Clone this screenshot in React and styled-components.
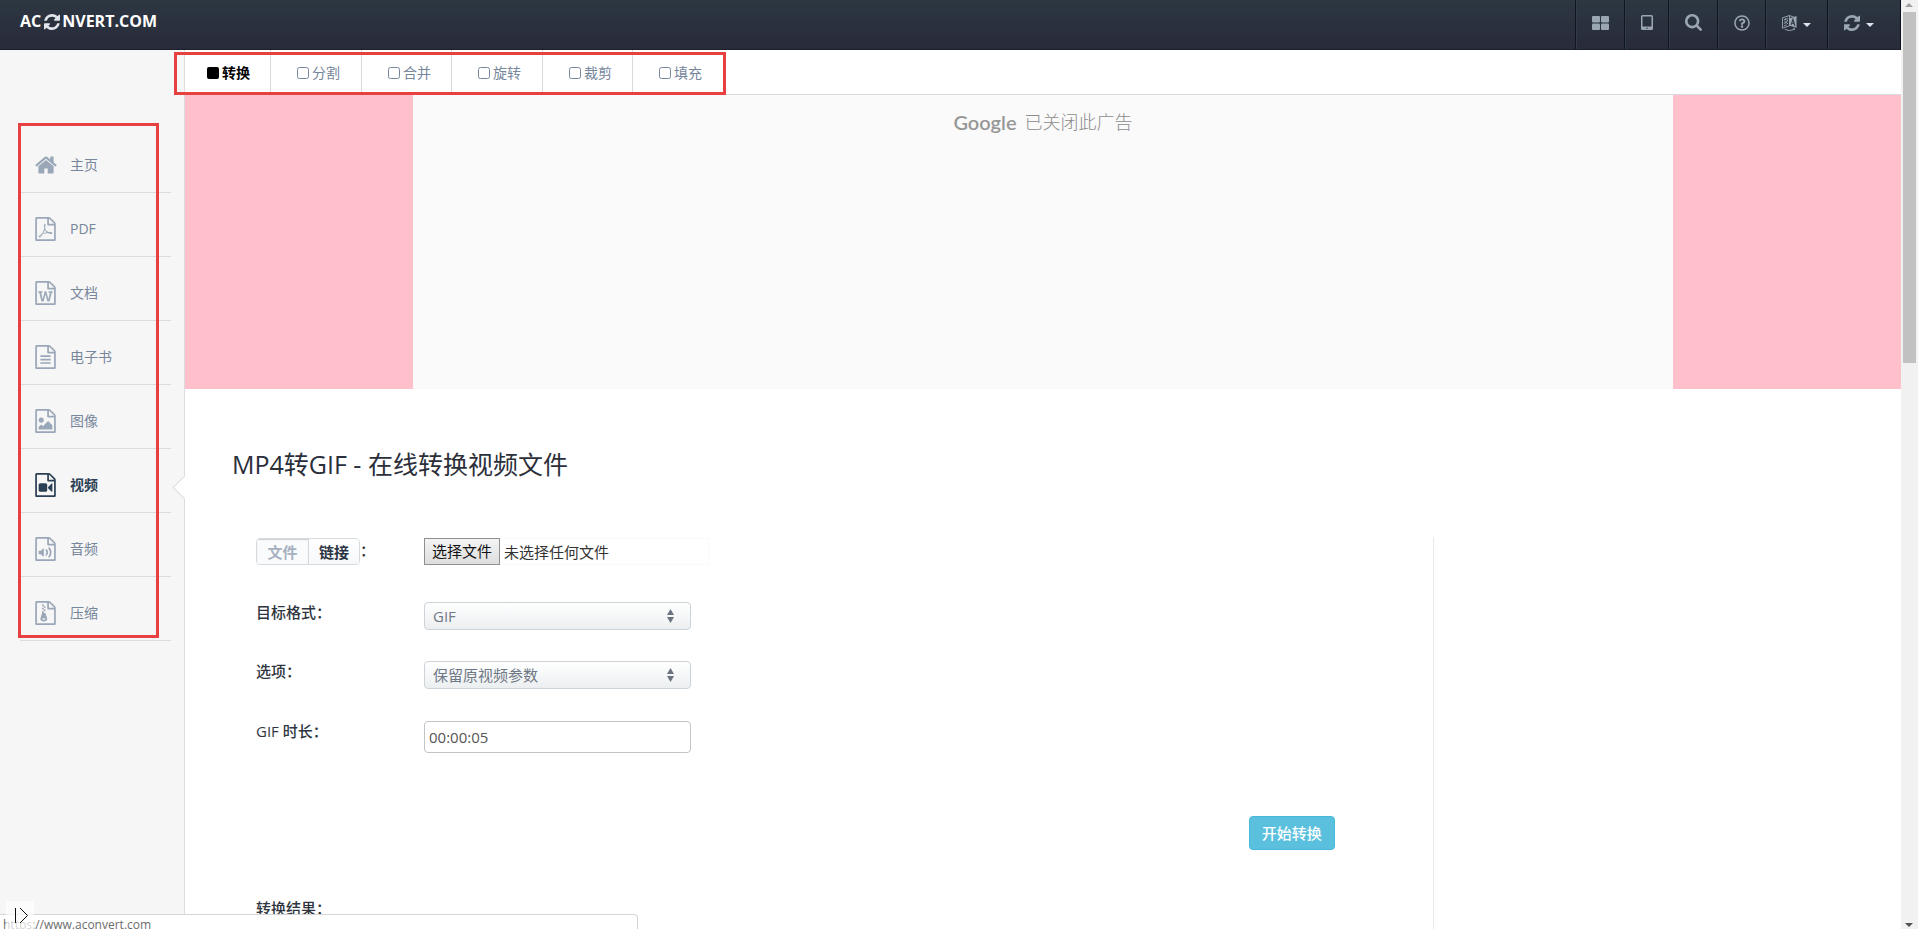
import React from "react";
import styled, { createGlobalStyle, css } from "styled-components";
import { FaRegQuestionCircle } from "react-icons/fa";

const GlobalStyle = createGlobalStyle`
  *, *::before, *::after { box-sizing: border-box; }
  body {
    margin: 0;
    background: #fff;
    color: #2f3540;
    font: 15px/20px "Open Sans", "Noto Sans CJK SC", sans-serif;
    overflow: hidden;
  }
  a { color: inherit; text-decoration: none; }
  button, input, select { font: inherit; margin: 0; }
`;

const Window = styled.div`
  display: flex;
  height: 100vh;
  overflow: hidden;
  position: relative;
`;

const Site = styled.div`
  flex: 1;
  min-width: 0;
  display: flex;
  flex-direction: column;
`;

/* ---------- header ---------- */

const Header = styled.header`
  flex: none;
  height: 50px;
  display: flex;
  justify-content: space-between;
  background: linear-gradient(#2c3742, #282b39);
  border-bottom: 1px solid #1b202a;
  border-right: 1px solid #0e131b;
`;

const Brand = styled.a`
  display: flex;
  align-items: center;
  align-self: flex-start;
  height: 42px;
  padding-left: 20px;
  color: #fff;
  font-size: 16px;
  font-weight: 700;
  svg { margin: 2px 2px 0 3px; fill: #dfe5ea; }
`;

const Tools = styled.nav`
  display: flex;
`;

const Tool = styled.button`
  width: ${(p) => p.$width}px;
  padding: 0 ${(p) => (p.$menu ? 16 : 0)}px 4px;
  display: flex;
  align-items: center;
  justify-content: ${(p) => (p.$menu ? "flex-start" : "center")};
  gap: 6px;
  background: none;
  border: 0;
  border-left: 1px solid #10161f;
  box-shadow: inset 1px 0 #323c49;
  color: #9ba6b3;
  fill: currentColor;
`;

const Caret = styled.span`
  margin-top: 4px;
  border: 4px solid transparent;
  border-top-color: #dde4ec;
  border-bottom: 0;
`;

/* ---------- sidebar ---------- */

const Body = styled.div`
  flex: 1;
  min-height: 0;
  display: flex;
`;

const Sidebar = styled.nav`
  flex: none;
  width: 185px;
  padding: 79px 13px 0 20px;
  background: #f6f6f6;
  border-right: 1px solid #dcdcde;
`;

const SideItem = styled.a`
  position: relative;
  display: flex;
  align-items: center;
  height: 64px;
  padding: 9px 0 0 15px;
  border-bottom: 1px solid #dcdcdf;
  font-size: 14px;
  color: ${(p) => (p.$active ? "#2b3f54" : "#76869b")};
  font-weight: ${(p) => (p.$active ? 700 : 400)};
  svg { flex: none; fill: ${(p) => (p.$active ? "#2b3f54" : "#9aa7b8")}; }
`;

const IconSlot = styled.span`
  width: 35px;
  display: flex;
`;

const Notch = styled.span`
  position: absolute;
  right: -22px;
  top: 30px;
  width: 17px;
  height: 17px;
  background: #fff;
  border-left: 1px solid #dcdcde;
  border-bottom: 1px solid #dcdcde;
  transform: rotate(45deg);
`;

/* ---------- content ---------- */

const Main = styled.main`
  flex: 1;
  min-width: 0;
  display: flex;
  flex-direction: column;
`;

const Tabs = styled.nav`
  flex: none;
  height: 45px;
  display: flex;
  border-bottom: 1px solid #d9dade;
`;

const Tab = styled.a`
  display: flex;
  align-items: center;
  gap: 3px;
  padding: 2px 21px 0 26px;
  border-right: 1px solid #d9dade;
  font-size: 14px;
  color: #76869b;
  fill: currentColor;
  &:first-child { padding-left: 22px; }
  &:nth-child(odd) { padding-right: 20px; }
  &:last-child { border-right: 0; }
  ${(p) => p.$active && css`color: #000; font-weight: 700;`}
`;

const AdBand = styled.section`
  flex: none;
  height: 294px;
  padding: 0 13.3%;
  background: #ffc0cb;
`;

const Ad = styled.div`
  height: 100%;
  padding-top: 13px;
  display: flex;
  align-items: flex-start;
  justify-content: center;
  gap: 8px;
  background: #fafafa;
  color: #8c8c8c;
  font-size: 18px;
  font-weight: 300;
  line-height: 28px;
`;

const GoogleName = styled.span`
  font-family: Lato, sans-serif;
  font-size: 20px;
  font-weight: 600;
  color: #979797;
`;

const Title = styled.h1`
  margin: 56px 47px 54px;
  font-size: 25px;
  line-height: 38px;
  font-weight: 400;
  color: #2b2f3a;
`;

const Columns = styled.div`
  flex: 1;
  min-height: 0;
  padding: 0 45px 0 47px;
`;

const Form = styled.form`
  width: 74%;
  height: 100%;
  padding: 1px 98px 0 24px;
  display: flex;
  flex-direction: column;
  border-right: 1px solid #e9e9ec;
`;

const Row = styled.div`
  flex: none;
  display: flex;
  height: ${(p) => p.$height}px;
`;

const LabelCell = styled.div`
  width: 168px;
  flex: none;
  display: flex;
  font-weight: 500;
`;

const FieldLabel = styled.label`
  font-size: 15px;
`;

const Colon = styled.span`
  padding-top: 2px;
`;

const Segment = styled.div`
  display: flex;
  height: 27px;
  border: 1px solid #d5dade;
  border-radius: 4px;
  overflow: hidden;
`;

const SegmentButton = styled.button`
  width: 52px;
  padding: 0;
  border: 0;
  background: linear-gradient(#fff, #f6f8fa);
  color: #2b3442;
  font-weight: 700;
  &:last-child { width: 50px; }
  ${(p) => p.$pressed && css`
    background: #fafbfc;
    border-right: 1px solid #d5dade;
    box-shadow: inset 0 1px 1px #c9ced2;
    color: #a6b1c0;
  `}
`;

const FileBox = styled.div`
  position: relative;
  width: 285px;
  height: 27px;
  display: flex;
  align-items: center;
  border: 1px solid #fafafa;
  border-left: 0;
  color: #333;
`;

const FileInput = styled.input`
  position: absolute;
  inset: 0;
  opacity: 0;
`;

const FileLabel = styled.label`
  width: 76px;
  height: 27px;
  margin-right: 4px;
  border: 1px solid #8f8f8f;
  background: linear-gradient(#f4f4f4, #dedede);
  color: #111;
  text-align: center;
  line-height: 24px;
`;

const SelectBox = styled.div`
  position: relative;
  width: 267px;
  height: 28px;
  svg { position: absolute; right: 17px; top: 7px; fill: #6d7480; pointer-events: none; }
`;

const Select = styled.select`
  appearance: none;
  width: 100%;
  height: 100%;
  padding: 0 36px 0 8px;
  border: 1px solid #ccd3d9;
  border-radius: 4px;
  background: linear-gradient(#fff, #eceff1);
  color: #6f7885;
  font-size: 15px;
`;

const TextInput = styled.input`
  width: 267px;
  height: 32px;
  padding: 0 4px;
  border: 1px solid #c4c4c4;
  border-radius: 4px;
  color: #555;
  font-size: 15px;
`;

const Submit = styled.button`
  align-self: flex-end;
  flex: none;
  width: 86px;
  height: 34px;
  margin-bottom: 48px;
  padding: 0;
  border: 1px solid #46b8da;
  border-radius: 4px;
  background: #5bc0de;
  color: #fff;
  font-weight: 500;
`;

const Result = styled.h2`
  margin: 0;
  font-size: 15px;
  line-height: 20px;
  font-weight: 500;
`;

/* ---------- browser chrome ---------- */

const Scrollbar = styled.div`
  flex: none;
  width: 17px;
  padding: 3px 3px 2px 2px;
  display: flex;
  flex-direction: column;
  align-items: center;
  background: #f1f1f1;
`;

const Thumb = styled.div`
  width: 13px;
  height: 38%;
  flex: none;
  margin: 5px 0 auto;
  background: #c1c1c1;
`;

const Arrow = styled.span`
  border: 4px solid transparent;
  ${(p) => (p.$up ? css`border-bottom-color: #a0a0a0; border-top: 0;` : css`border-top-color: #505050; border-bottom: 0;`)}
`;

const StatusBar = styled.div`
  position: absolute;
  left: 0;
  bottom: 0;
  width: 638px;
  height: 15px;
  padding: 1px 3px 0;
  background: #fff;
  border-top: 1px solid #d5d5d5;
  border-right: 1px solid #d5d5d5;
  border-top-right-radius: 4px;
  color: #6c6c6c;
  font: 12px/18px "Open Sans", sans-serif;
`;

const Handle = styled.button`
  position: absolute;
  left: 6px;
  bottom: 0;
  width: 28px;
  height: 28px;
  padding: 0;
  border: 0;
  background: rgba(255, 255, 255, 0.7);
  svg { display: block; }
`;

const Mark = styled.div`
  position: absolute;
  left: ${(p) => p.$x}px;
  top: ${(p) => p.$y}px;
  width: ${(p) => p.$w}px;
  height: ${(p) => p.$h}px;
  border: 3px solid #e64040;
  pointer-events: none;
`;

/* ---------- icons ---------- */

const SHEET =
  "M1468 380q28 28 48 76t20 88v1152q0 40-28 68t-68 28h-1344q-40 0-68-28t-28-68v-1600q0-40 28-68t68-28h896q40 0 88 20t76 48zm-444-244v376h376q-10-29-22-41l-313-313q-12-12-41-22zm384 1528v-1024h-416q-40 0-68-28t-28-68v-416h-768v1536h1280z";

const CONTENTS = {
  pdf: "M894 1071q33 26 84 56 59-7 117-7 147 0 177 49 16 22 2 52 0 1-1 2l-2 2v1q-6 38-71 38-48 0-115-20t-130-53q-221 24-392 83-153 262-242 262-15 0-28-7l-24-12q-1-1-6-5-10-10-6-36 9-40 56-91.5t132-96.5q14-9 23 6 2 2 2 4 52-85 107-197 68-136 104-262-24-82-30.5-159.5t6.5-127.5q11-40 42-40h22q23 0 35 15 18 21 9 68-2 6-4 8 1 3 1 8v30q-2 123-14 192 55 164 146 238zm-576 411q52-24 137-158-51 40-87.5 84t-49.5 74zm398-920q-15 42-2 132 1-7 7-44 0-3 7-43 1-4 4-8-1-1-1-2t-1-2-1-2q-1-22-13-36 0 1-1 2v2zm-124 661q135-54 284-81-2-1-13-9.5t-16-13.5q-76-67-127-176-27 86-83 197-30 56-45 83zm646-16q-24-24-140-24 76 28 124 28 14 0 18-1 0-1-2-3z",
  doc: "M233 768v107h70l164 661h159l128-485q7-20 10-46 2-16 2-24h4l3 24q1 3 3.5 20t5.5 26l128 485h159l164-661h70v-107h-300v107h90l-99 438q-5 20-7 46l-2 21h-4l-3-21q-1-5-4-21t-5-25l-144-545h-114l-144 545q-2 9-4.5 24.5t-3.5 21.5l-4 21h-4l-2-21q-2-26-7-46l-99-438h90v-107h-300z",
  book: "M384 800q0-14 9-23t23-9h704q14 0 23 9t9 23v64q0 14-9 23t-23 9h-704q-14 0-23-9t-9-23v-64zm736 224q14 0 23 9t9 23v64q0 14-9 23t-23 9h-704q-14 0-23-9t-9-23v-64q0-14 9-23t23-9h704zm0 256q14 0 23 9t9 23v64q0 14-9 23t-23 9h-704q-14 0-23-9t-9-23v-64q0-14 9-23t23-9h704z",
  image: "M1280 1216v320h-1024v-192l192-192 128 128 384-384zm-832-192q-80 0-136-56t-56-136 56-136 136-56 136 56 56 136-56 136-136 56z",
  video: "M768 768q52 0 90 38t38 90v384q0 52-38 90t-90 38h-384q-52 0-90-38t-38-90v-384q0-52 38-90t90-38h384zm492 2q20 8 20 30v576q0 22-20 30-8 2-12 2-14 0-23-9l-265-266v-90l265-266q9-9 23-9 4 0 12 2z",
  audio: "M620 850q20 8 20 30v544q0 22-20 30-8 2-12 2-12 0-23-9l-166-167h-131q-14 0-23-9t-9-23v-192q0-14 9-23t23-9h131l166-167q16-15 35-7zm417 689q31 0 50-24 129-159 129-363t-129-363q-16-21-43-24t-47 14q-21 17-23.5 43.5t14.5 47.5q100 123 100 282t-100 282q-17 21-14.5 47.5t23.5 42.5q18 15 40 15zm-211-148q27 0 47-20 87-93 87-219t-87-219q-18-19-45-20t-46 17-20 44.5 18 46.5q52 57 52 131t-52 131q-19 20-18 46.5t20 44.5q20 17 44 17z",
  zip: "M640 384v-128h-128v128h128zm128 128v-128h-128v128h128zm-128 128v-128h-128v128h128zm128 128v-128h-128v128h128zM781 943l107 349q8 27 8 52 0 83-72.5 137.5t-183.5 54.5-183.5-54.5-72.5-137.5q0-25 8-52 21-63 120-396v-128h128v128h79q22 0 39 13t23 34zm-141 465q53 0 90.5-19t37.5-45-37.5-45-90.5-19-90.5 19-37.5 45 37.5 45 90.5 19z",
};

const FileIcon = ({ kind }) => (
  <svg width="21" height="24" viewBox="0 0 1536 1792" aria-hidden="true">
    <path d={SHEET} />
    <path d={CONTENTS[kind]} />
  </svg>
);

const HomeIcon = () => (
  <svg width="22" height="24" viewBox="0 0 1664 1792" aria-hidden="true">
    <path d="M1408 992v480q0 26-19 45t-45 19h-384v-384h-256v384h-384q-26 0-45-19t-19-45v-480q0-1 .5-3t.5-3l575-474 575 474q1 2 1 6zm223-69l-62 74q-8 9-21 11h-3q-13 0-21-7l-692-577-692 577q-12 8-24 7-13-2-21-11l-62-74q-8-10-7-23.5t11-21.5l719-599q32-26 76-26t76 26l244 204v-195q0-14 9-23t23-9h192q14 0 23 9t9 23v408l219 182q10 8 11 21.5t-7 23.5z" />
  </svg>
);

const RefreshIcon = ({ size }) => (
  <svg width={size} height={size} viewBox="0 128 1536 1536" aria-hidden="true">
    <path d="M1511 1056q0 5-1 7-64 268-268 434.5t-478 166.5q-146 0-282.5-55t-243.5-157l-129 129q-19 19-45 19t-45-19-19-45v-448q0-26 19-45t45-19h448q26 0 45 19t19 45-19 45l-137 137q71 66 161 102t187 36q134 0 250-65t186-179q11-17 53-117 8-23 30-23h192q13 0 22.5 9.5t9.5 22.5zm25-800v448q0 26-19 45t-45 19h-448q-26 0-45-19t-19-45 19-45l138-138q-148-137-349-137-134 0-250 65t-186 179q-11 17-53 117-8 23-30 23h-199q-13 0-22.5-9.5t-9.5-22.5v-7q65-268 270-434.5t480-166.5q146 0 284 55.5t245 156.5l130-129q19-19 45-19t45 19 19 45z" />
  </svg>
);

const GridIcon = () => (
  <svg width="17" height="14" viewBox="0 0 17 14" aria-hidden="true">
    <rect width="8" height="6.5" rx="1" />
    <rect x="9" width="8" height="6.5" rx="1" />
    <rect y="7.5" width="8" height="6.5" rx="1" />
    <rect x="9" y="7.5" width="8" height="6.5" rx="1" />
  </svg>
);

const TabletIcon = () => (
  <svg width="12" height="15" viewBox="0 0 12 15" aria-hidden="true">
    <path fillRule="evenodd" d="M1.5 0h9A1.5 1.5 0 0 1 12 1.500v12A1.500 1.500 0 0 1 10.500 15h-9A1.500 1.500 0 0 1 0 13.500v-12A1.500 1.500 0 0 1 1.500 0zM1.500 1.500v10h9v-10zM6 12.500a.7.7 0 1 0 0 1.400.7.7 0 0 0 0-1.400z" />
  </svg>
);

const SearchIcon = () => (
  <svg width="17" height="17" viewBox="0 128 1664 1664" aria-hidden="true">
    <path d="M1152 832q0-185-131.500-316.500t-316.500-131.500-316.500 131.500-131.500 316.500 131.500 316.500 316.500 131.500 316.500-131.500 131.500-316.500zm512 832q0 52-38 90t-90 38q-54 0-90-38l-343-342q-179 124-399 124-143 0-273.500-55.500t-225-150-150-225-55.500-273.500 55.500-273.500 150-225 225-150 273.500-55.500 273.500 55.500 225 150 150 225 55.500 273.500q0 220-124 399l343 343q37 37 37 90z" />
  </svg>
);

const LanguageIcon = () => (
  <svg width="16" height="18" viewBox="0 0 16 18" aria-hidden="true">
    <path d="M8 4l7.500-2.500v12.500L8 12z" />
    <path d="M9.700 11l2-6 2 7M10.300 9l3 .6" fill="none" stroke="#2b323e" strokeWidth="1.100" />
    <path d="M.5 3.500L8 1v11L.500 14.500zM8 1l5 2" fill="none" stroke="currentColor" />
    <path d="M2 5.500l4.500-1.200M4 4v2M2 9.500c2.500-.8 3.700-2 4-4M2.500 7l4 3M2 12l3-1" fill="none" stroke="currentColor" />
    <path d="M3 15.500c3 2 7 2 10 0M12 14.500l1.500.5-.5 1.500" fill="none" stroke="currentColor" />
  </svg>
);

const BoxIcon = ({ filled }) => (
  <svg width="12" height="12" viewBox="0 0 12 12" aria-hidden="true">
    {filled ? (
      <rect width="12" height="12" rx="2" />
    ) : (
      <rect x=".5" y=".5" width="11" height="11" rx="2" fill="none" stroke="currentColor" />
    )}
  </svg>
);

const SortIcon = () => (
  <svg width="7" height="14" viewBox="0 0 7 14" aria-hidden="true">
    <path d="M3.500 0L7 6H0zM3.500 14L7 8H0z" />
  </svg>
);

/* ---------- data ---------- */

const sections = [
  { name: "主页", icon: <HomeIcon /> },
  { name: "PDF", icon: <FileIcon kind="pdf" /> },
  { name: "文档", icon: <FileIcon kind="doc" /> },
  { name: "电子书", icon: <FileIcon kind="book" /> },
  { name: "图像", icon: <FileIcon kind="image" /> },
  { name: "视频", icon: <FileIcon kind="video" />, active: true },
  { name: "音频", icon: <FileIcon kind="audio" /> },
  { name: "压缩", icon: <FileIcon kind="zip" /> },
];

const actions = ["转换", "分割", "合并", "旋转", "裁剪", "填充"];

export default function App() {
  return (
    <Window>
      <GlobalStyle />
      <Site>
        <Header>
          <Brand href="#">
            AC
            <RefreshIcon size={16} />
            NVERT.COM
          </Brand>
          <Tools>
            <Tool $width={49} aria-label="Apps"><GridIcon /></Tool>
            <Tool $width={44} aria-label="Mobile"><TabletIcon /></Tool>
            <Tool $width={49} aria-label="Search"><SearchIcon /></Tool>
            <Tool $width={48} aria-label="Help"><FaRegQuestionCircle size={16} /></Tool>
            <Tool $width={62} $menu aria-label="Language"><LanguageIcon /><Caret /></Tool>
            <Tool $width={73} $menu aria-label="Convert"><RefreshIcon size={16} /><Caret /></Tool>
          </Tools>
        </Header>
        <Body>
          <Sidebar>
            {sections.map((s) => (
              <SideItem key={s.name} href="#" $active={s.active}>
                <IconSlot>{s.icon}</IconSlot>
                {s.name}
                {s.active && <Notch />}
              </SideItem>
            ))}
          </Sidebar>
          <Main>
            <Tabs>
              {actions.map((name, i) => (
                <Tab key={name} href="#" $active={i === 0}>
                  <BoxIcon filled={i === 0} />
                  {name}
                </Tab>
              ))}
            </Tabs>
            <AdBand>
              <Ad>
                <GoogleName>Google</GoogleName>
                <span>已关闭此广告</span>
              </Ad>
            </AdBand>
            <Title>MP4转GIF - 在线转换视频文件</Title>
            <Columns>
              <Form onSubmit={(e) => e.preventDefault()}>
                <Row $height={64}>
                  <LabelCell>
                    <Segment>
                      <SegmentButton type="button" $pressed>文件</SegmentButton>
                      <SegmentButton type="button">链接</SegmentButton>
                    </Segment>
                    <Colon>：</Colon>
                  </LabelCell>
                  <FileBox>
                    <FileInput type="file" id="file" />
                    <FileLabel htmlFor="file">选择文件</FileLabel>
                    <span>未选择任何文件</span>
                  </FileBox>
                </Row>
                <Row $height={59}>
                  <LabelCell><FieldLabel htmlFor="format">目标格式：</FieldLabel></LabelCell>
                  <SelectBox>
                    <Select id="format"><option>GIF</option></Select>
                    <SortIcon />
                  </SelectBox>
                </Row>
                <Row $height={60}>
                  <LabelCell><FieldLabel htmlFor="option">选项：</FieldLabel></LabelCell>
                  <SelectBox>
                    <Select id="option"><option>保留原视频参数</option></Select>
                    <SortIcon />
                  </SelectBox>
                </Row>
                <Row $height={95}>
                  <LabelCell><FieldLabel htmlFor="duration">GIF 时长：</FieldLabel></LabelCell>
                  <TextInput id="duration" type="text" defaultValue="00:00:05" />
                </Row>
                <Submit type="submit">开始转换</Submit>
                <Result>转换结果：</Result>
              </Form>
            </Columns>
          </Main>
        </Body>
      </Site>
      <Scrollbar>
        <Arrow $up />
        <Thumb />
        <Arrow />
      </Scrollbar>
      <StatusBar>https://www.aconvert.com</StatusBar>
      <Handle aria-label="Expand">
        <svg width="28" height="28" viewBox="0 0 28 28" fill="none" stroke="#111">
          <path d="M9.500 7v15M14 7l7.500 7.500L14 22" />
        </svg>
      </Handle>
      <Mark $x={174} $y={52} $w={552} $h={43} />
      <Mark $x={18} $y={123} $w={141} $h={515} />
    </Window>
  );
}
